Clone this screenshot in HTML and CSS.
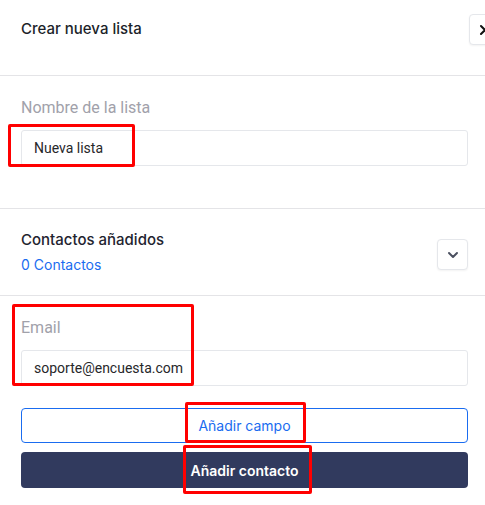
FILE: index.html
```html
<!DOCTYPE html>
<html lang="es">

<head>
    <meta charset="UTF-8">
    <meta name="viewport" content="width=device-width, initial-scale=1.0">
    <title>Crear nueva lista</title>
    <link rel="stylesheet" href="styles.css">
</head>

<body>
    <div class="panel">
        <header class="panel-header">
            <h1>Crear nueva lista</h1>
            <button type="button" class="icon-btn close-btn" aria-label="Cerrar">
                <svg width="12" height="12" viewBox="0 0 12 12">
                    <path d="M2 2 L10 10 M10 2 L2 10" stroke="#111" stroke-width="2" stroke-linecap="round" fill="none" />
                </svg>
            </button>
        </header>

        <section class="section list-name">
            <label for="list-name">Nombre de la lista</label>
            <div class="marked">
                <input type="text" id="list-name" value="Nueva lista">
                <span class="mark mark-name"></span>
            </div>
        </section>

        <section class="section contacts">
            <div>
                <h2>Contactos añadidos</h2>
                <a href="#" class="count">0 Contactos</a>
            </div>
            <button type="button" class="icon-btn toggle-btn" aria-label="Mostrar">
                <svg width="12" height="8" viewBox="0 0 12 8">
                    <path d="M2 2 L6 6 L10 2" stroke="#4b5060" stroke-width="2" stroke-linecap="round" stroke-linejoin="round" fill="none" />
                </svg>
            </button>
        </section>

        <section class="section new-contact">
            <div class="marked">
                <label for="email">Email</label>
                <input type="text" id="email" value="soporte@encuesta.com">
                <span class="mark mark-email"></span>
            </div>
            <div class="actions">
                <div class="marked">
                    <button type="button" class="btn btn-outline">Añadir campo</button>
                    <span class="mark mark-field"></span>
                </div>
                <div class="marked">
                    <button type="button" class="btn btn-primary">Añadir contacto</button>
                    <span class="mark mark-add"></span>
                </div>
            </div>
        </section>
    </div>
</body>

</html>
```

FILE: styles.css
```css
body {
    margin: 0;
    background: #ffffff;
    font-family: Inter, "Noto Sans", Arial, sans-serif;
    color: #1f2430;
}

.panel {
    width: 485px;
    overflow: hidden;
    padding-bottom: 16px;
}

.panel-header {
    display: flex;
    align-items: flex-start;
    justify-content: space-between;
    height: 76px;
    padding: 14px 0 0 21px;
    border-bottom: 1px solid #e4e4e7;
    box-sizing: border-box;
}

.panel-header h1 {
    margin: 6px 0 0 0;
    font-size: 15px;
    font-weight: 500;
    line-height: 18px;
    color: #1c1f2a;
}

.icon-btn {
    display: flex;
    align-items: center;
    justify-content: center;
    flex-shrink: 0;
    width: 31px;
    height: 31px;
    padding: 0;
    background: #ffffff;
    border: 1px solid #e5e7eb;
    border-radius: 4px;
    box-shadow: 0 1px 2px rgba(0, 0, 0, 0.05);
    cursor: pointer;
}

.close-btn {
    margin-right: -15px;
}

.section {
    padding: 0 17px 0 21px;
    border-bottom: 1px solid #e4e4e7;
}

.marked {
    position: relative;
}

label {
    display: block;
    font-family: Roboto, Arial, sans-serif;
    font-size: 16px;
    line-height: 19px;
    color: #a1a1aa;
    margin-bottom: 13px;
}

input {
    display: block;
    width: 100%;
    height: 36px;
    box-sizing: border-box;
    padding: 0 12px;
    border: 1px solid #e5e7eb;
    border-radius: 3px;
    font-family: Roboto, Arial, sans-serif;
    font-size: 14px;
    color: #27272a;
}

.list-name {
    height: 133px;
    padding-top: 22px;
    box-sizing: border-box;
}

.contacts {
    display: flex;
    align-items: center;
    justify-content: space-between;
    height: 87px;
    box-sizing: border-box;
}

.contacts h2 {
    margin: 0 0 5px 0;
    font-size: 15px;
    font-weight: 500;
    line-height: 19px;
    color: #1f2430;
}

.contacts .count {
    font-size: 14px;
    line-height: 18px;
    color: #1a6cf0;
    text-decoration: none;
}

.toggle-btn {
    margin-top: 5px;
}

.new-contact {
    border-bottom: none;
    padding-top: 22px;
}

.actions {
    display: flex;
    flex-direction: column;
    gap: 9px;
    margin-top: 22px;
}

.btn {
    display: block;
    width: 100%;
    height: 36px;
    border-radius: 4px;
    font-family: Inter, Arial, sans-serif;
    font-size: 14px;
    cursor: pointer;
}

.btn-outline {
    background: #ffffff;
    border: 1px solid #1a6cf0;
    color: #1a6cf0;
    height: 35px;
}

.btn-primary {
    background: #313a5e;
    border: none;
    color: #ffffff;
    font-weight: 600;
}

/* red annotation boxes */
.mark {
    position: absolute;
    z-index: 2;
    box-sizing: border-box;
    border: 3px solid #ff0000;
    border-radius: 2px;
    pointer-events: none;
}

.mark-name {
    left: -13px;
    top: -6px;
    width: 127px;
    height: 43px;
}

.mark-email {
    left: -9px;
    top: -14px;
    width: 182px;
    height: 82px;
}

.mark-field {
    left: 164px;
    top: -6px;
    width: 121px;
    height: 41px;
}

.mark-add {
    left: 162px;
    top: -7px;
    width: 129px;
    height: 49px;
}
```
